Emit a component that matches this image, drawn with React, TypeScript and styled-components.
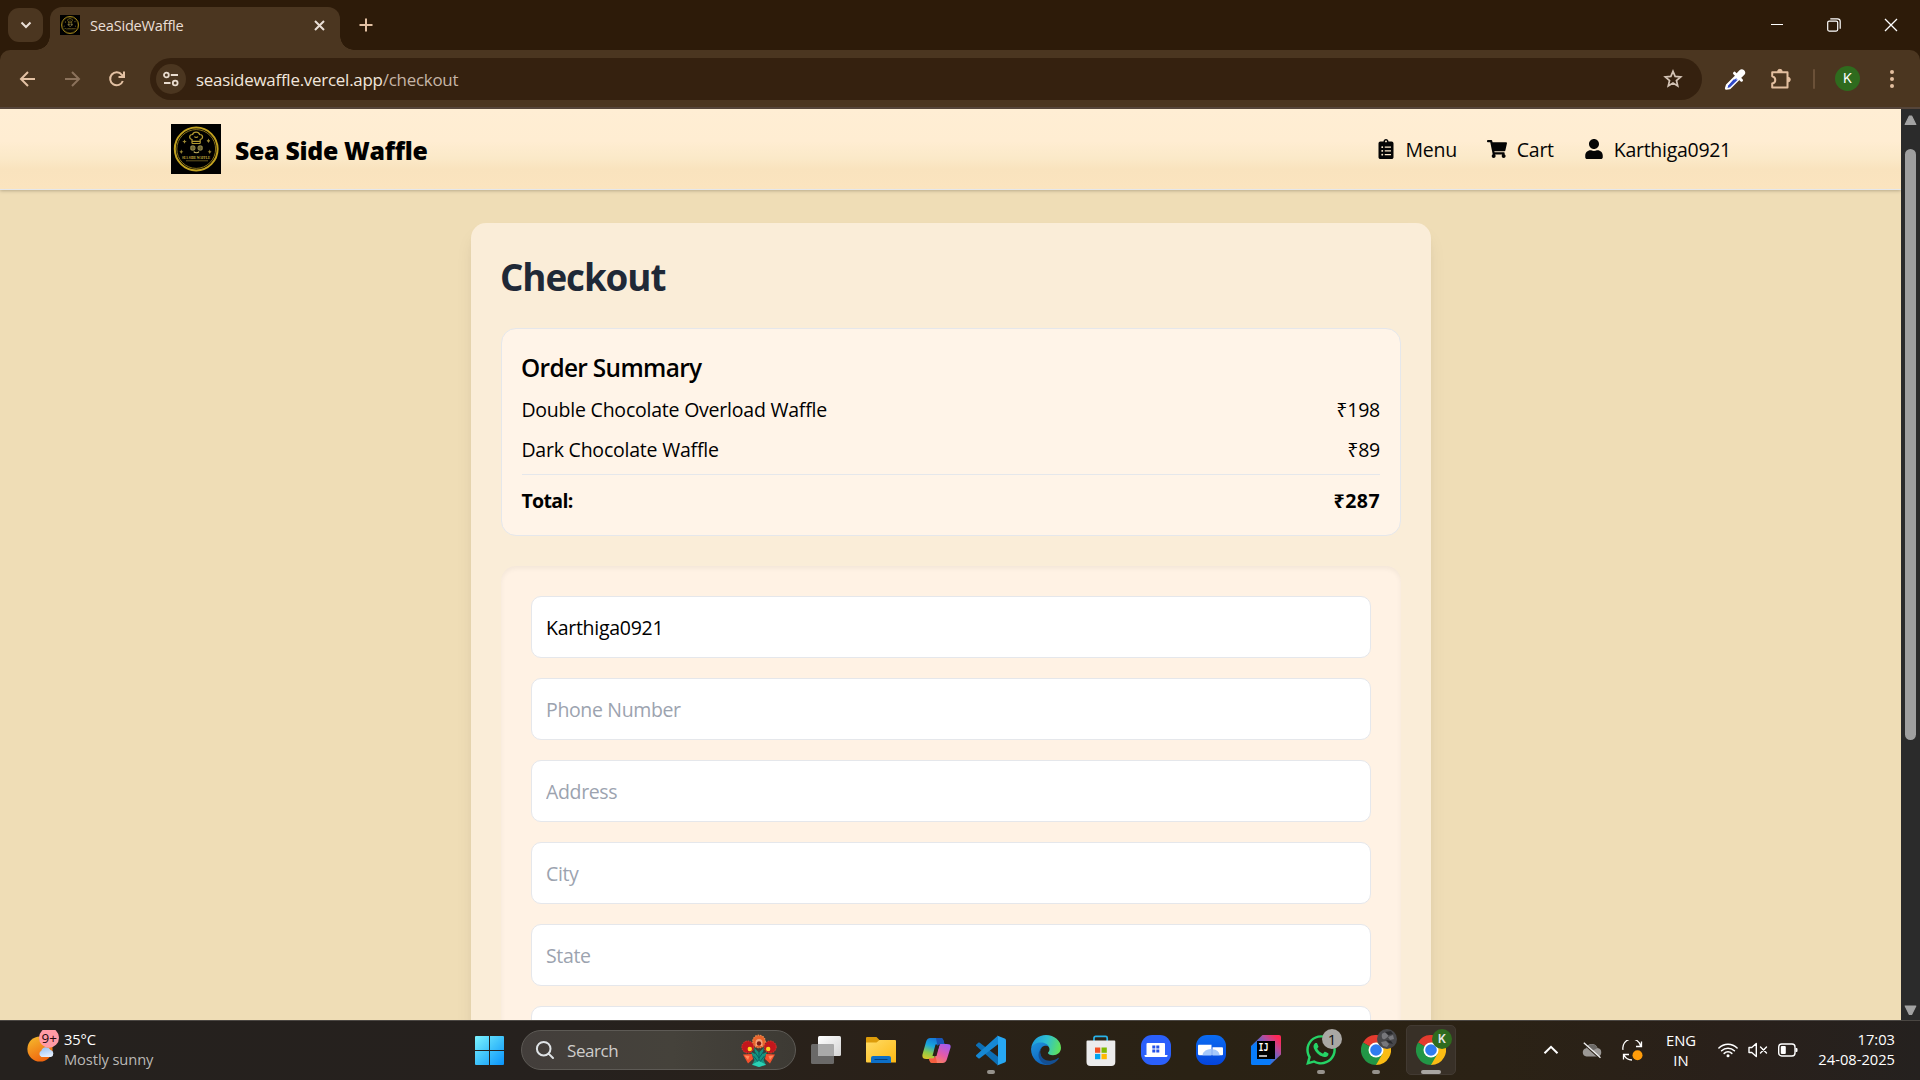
import React from "react";
import styled, { createGlobalStyle, css } from "styled-components";
import { FaClipboardList, FaShoppingCart, FaUser, FaWhatsapp } from "react-icons/fa";

const GlobalStyle = createGlobalStyle`
  *, *::before, *::after { box-sizing: border-box; }
  html, body { margin: 0; padding: 0; overflow: hidden; background: #2d1b09; }
  body { font-family: "Segoe UI", "Open Sans", "Noto Sans", sans-serif; }
  svg { display: block; flex: none; }
`;

const Screen = styled.div`
  display: flex;
  flex-direction: column;
  width: 1920px;
  height: 1080px;
  overflow: hidden;
`;

/* ---------- browser chrome ---------- */

const TabStrip = styled.div`
  display: flex;
  height: 50px;
  padding: 7px 0 0 8px;
  background: #2d1b09;
`;

const TabSearch = styled.button`
  display: flex;
  align-items: center;
  justify-content: center;
  width: 35px;
  height: 34px;
  margin: 1px 7px 0 0;
  padding: 0;
  border: 0;
  border-radius: 11px;
  background: #4b3620;
`;

const Tab = styled.div`
  position: relative;
  display: flex;
  align-items: center;
  width: 290px;
  height: 43px;
  padding: 0 14px 7px 10px;
  border-radius: 12px 12px 0 0;
  background: #4b3620;

  &::before,
  &::after {
    content: "";
    position: absolute;
    bottom: 0;
    width: 14px;
    height: 14px;
  }
  &::before {
    left: -14px;
    background: radial-gradient(circle at 0 0, transparent 13.5px, #4b3620 14px);
  }
  &::after {
    right: -14px;
    background: radial-gradient(circle at 100% 0, transparent 13.5px, #4b3620 14px);
  }
`;

const TabTitle = styled.span`
  flex: 1;
  margin-left: 10px;
  font-size: 14.6px;
  letter-spacing: -0.22px;
  line-height: 20px;
  color: #eadfd6;
`;

const NewTab = styled.div`
  display: flex;
  align-items: center;
  height: 36px;
  margin-left: 19px;
`;

const WindowControls = styled.div`
  display: flex;
  align-items: center;
  height: 35px;
  margin-left: auto;
  padding-right: 22px;
  gap: 43px;
`;

const ToolbarBack = styled.div`
  background: #2d1b09;
`;

const Toolbar = styled.div`
  display: flex;
  align-items: center;
  height: 59px;
  padding: 0 24px 0 17px;
  border-bottom: 2px solid #55453a;
  border-radius: 10px 10px 0 0;
  background: #4b3620;
`;

const NavButtons = styled.div`
  display: flex;
  gap: 25px;
  width: 133px;
`;

const Omnibox = styled.div`
  display: flex;
  align-items: center;
  width: 1552px;
  height: 42px;
  margin-top: 1px;
  padding: 0 19px 0 6px;
  border-radius: 21px;
  background: #35210f;
`;

const SiteInfo = styled.span`
  display: flex;
  align-items: center;
  justify-content: center;
  width: 30px;
  height: 30px;
  border-radius: 50%;
  background: #4b3620;
`;

const Url = styled.span`
  flex: 1;
  margin-left: 10px;
  padding-top: 1px;
  font-size: 16.9px;
  letter-spacing: -0.23px;
  line-height: 24px;
  color: #f1e6dc;
`;

const UrlPath = styled.span`
  color: #c6b5a6;
`;

const Extensions = styled.div`
  display: flex;
  align-items: center;
  flex: 1;
  margin-left: 22px;
`;

const ExtensionDivider = styled.span`
  width: 2px;
  height: 20px;
  margin: 0 20px 0 21px;
  border-radius: 1px;
  background: #6b5138;
`;

const Avatar = styled.span`
  display: flex;
  align-items: center;
  justify-content: center;
  width: 25px;
  height: 25px;
  border-radius: 50%;
  background: #2f6b1e;
  color: #fff;
  font: 13.5px/25px Inter, sans-serif;
`;

const MenuDots = styled.span`
  display: flex;
  flex-direction: column;
  gap: 3px;
  margin-left: auto;
  padding-right: 2px;

  i {
    width: 4px;
    height: 4px;
    border-radius: 50%;
    background: #e3bf9f;
  }
`;

/* ---------- page ---------- */

const Viewport = styled.div`
  display: flex;
  height: 911px;
  overflow: hidden;
`;

const Page = styled.div`
  display: flex;
  flex-direction: column;
  width: 1901px;
  height: 911px;
  overflow: hidden;
  background: #efddb6;
`;

const SiteHeader = styled.header`
  display: flex;
  flex: none;
  align-items: center;
  justify-content: space-between;
  height: 81px;
  padding: 0 170px 0 171px;
  border-bottom: 1px solid #e5e7eb;
  background: linear-gradient(180deg, #ffeed4 0%, #ffedd2 40%, #fbe9c8 62%, #f9e3be 75%, #fbe4bf 100%);
  box-shadow: 0 1px 4px rgba(0, 0, 0, 0.16), 0 1px 2px rgba(0, 0, 0, 0.08);
`;

const Brand = styled.div`
  display: flex;
  align-items: center;
  gap: 14px;
`;

const BrandName = styled.span`
  padding-top: 1px;
  font-size: 24.8px;
  font-weight: 800;
  letter-spacing: -0.28px;
  line-height: 32px;
  color: #000;
`;

const SiteNav = styled.nav`
  display: flex;
  gap: 30px;
`;

const NavLink = styled.a`
  display: flex;
  align-items: center;
  gap: 10px;
  font-size: 19.5px;
  letter-spacing: -0.28px;
  line-height: 30px;
  color: #050505;

  span {
    padding-top: 2px;
  }

  svg {
    width: 20px;
    height: 20px;
  }
`;

const CheckoutCard = styled.main`
  flex: none;
  width: 960px;
  height: 1000px;
  margin: 33px 0 0 471px;
  padding: 30px;
  border-radius: 15px;
  background: #faedd8;
  box-shadow: 0 12px 19px -4px rgba(0, 0, 0, 0.1), 0 5px 8px -5px rgba(0, 0, 0, 0.1);
`;

const PageTitle = styled.h1`
  margin: 0 0 30px -1px;
  height: 45px;
  font-size: 36.8px;
  font-weight: 700;
  letter-spacing: -1.1px;
  line-height: 48px;
  color: #1f2937;
`;

const Summary = styled.section`
  height: 208px;
  padding: 20px;
  border: 1px solid #e5e7eb;
  border-radius: 15px;
  background: #fff4e8;
  color: #000;
`;

const SummaryTitle = styled.h2`
  height: 35px;
  margin: 0 0 10px -1px;
  font-size: 24.4px;
  font-weight: 600;
  letter-spacing: -0.66px;
  line-height: 37px;
`;

const Line = styled.div<{ $total?: boolean }>`
  display: flex;
  justify-content: space-between;
  height: 30px;
  margin-bottom: 10px;
  font-size: 19.5px;
  letter-spacing: -0.22px;
  line-height: 32px;

  span:first-child {
    margin-left: -0.6px;
  }

  ${(p) =>
    p.$total &&
    css`
      height: 41px;
      margin: 0;
      padding-top: 10px;
      border-top: 1px solid #e5e7eb;
      font-weight: 700;
      letter-spacing: -0.65px;

      span:last-child {
        letter-spacing: 0.45px;
      }
    `}
`;

const Form = styled.form`
  display: flex;
  flex-direction: column;
  gap: 20px;
  height: 700px;
  margin-top: 30px;
  padding: 30px;
  border-radius: 15px;
  background: #fff2e4;
  box-shadow: inset 0 2.5px 5px rgba(0, 0, 0, 0.05);
`;

const Field = styled.input`
  width: 840px;
  height: 62px;
  padding: 1px 14px 0;
  border: 1px solid #e5e7eb;
  border-radius: 10px;
  background: #fff;
  font-family: inherit;
  font-size: 19.5px;
  letter-spacing: -0.27px;
  line-height: 30px;
  color: #000;
  outline: 0;

  &::placeholder {
    color: #9ca3af;
    opacity: 1;
    letter-spacing: -0.35px;
  }
`;

const Scrollbar = styled.div`
  display: flex;
  flex-direction: column;
  align-items: center;
  width: 19px;
  padding: 6px 0 4px;
  background: #2b2b2b;
`;

const Thumb = styled.div`
  width: 11px;
  height: 591px;
  margin: 23px 0 auto;
  border-radius: 6px;
  background: #9f9f9f;
`;

/* ---------- taskbar ---------- */

const Taskbar = styled.footer`
  display: flex;
  height: 60px;
  border-top: 1px solid #4b4743;
  background: linear-gradient(90deg, #25211e 0%, #26211e 30%, #2a2118 48%, #2a2214 62%, #2b2215 78%, #29201a 90%, #25211f 100%);
  color: #fff;
`;

const Weather = styled.div`
  display: flex;
  width: 460px;
  padding: 9px 0 0 26px;
`;

const WeatherText = styled.div`
  margin: -1px 0 0 5px;
  font-size: 14.7px;
  letter-spacing: -0.1px;
  line-height: 20px;
  color: #fff;
`;

const Muted = styled.div`
  color: #bab8b6;
`;

const Slot = styled.div<{ $active?: boolean }>`
  position: relative;
  display: flex;
  align-items: center;
  justify-content: center;
  width: 50px;
  height: 50px;
  margin: 4px 2.5px 0;
  border: 1px solid ${(p) => (p.$active ? "#423a32" : "transparent")};
  border-radius: 5px;
  background: ${(p) => (p.$active ? "#383027" : "transparent")};
`;

const StartSlot = styled(Slot)`
  width: 59px;
  margin: 4px 2px 0 0;
`;

const SearchBox = styled.div`
  display: flex;
  align-items: center;
  width: 275px;
  height: 40px;
  margin: 9px 2.5px 0 0;
  padding: 0 18px 0 13px;
  border: 1px solid #5d5a55;
  border-radius: 20px;
  background: linear-gradient(90deg, #433e3b, #45423b 55%, #3d3a34);
`;

const SearchLabel = styled.span`
  flex: 1;
  margin-left: 12px;
  padding-top: 1px;
  font-size: 17px;
  letter-spacing: -0.42px;
  color: #cfcdcb;
`;

const Running = styled.span<{ $wide?: boolean }>`
  position: absolute;
  left: 50%;
  bottom: 0;
  width: ${(p) => (p.$wide ? 20 : 8)}px;
  height: 4px;
  border-radius: 2px;
  background: ${(p) => (p.$wide ? "#a9a6a2" : "#96928c")};
  transform: translateX(-50%);
`;

const IconBadge = styled.span<{ $bg: string; $color?: string }>`
  position: absolute;
  top: 3px;
  right: 3px;
  width: 20px;
  height: 20px;
  border-radius: 50%;
  background: ${(p) => p.$bg};
  color: ${(p) => p.$color ?? "#111"};
  font: 15px/20px "Open Sans", sans-serif;
  text-align: center;
`;

const AvatarBadge = styled(IconBadge)`
  font: 600 11.5px/20px Inter, sans-serif;
`;

const PhotoBadge = styled.svg`
  position: absolute;
  top: 3px;
  right: 3px;
`;

const Tray = styled.div`
  display: flex;
  align-items: center;
  margin-left: auto;
  padding: 0 25px 1px 0;
`;

const Language = styled.div`
  width: 34px;
  margin: 0 20px 0 21px;
  font-size: 14.8px;
  line-height: 20px;
  text-align: center;
`;

const Clock = styled.div`
  width: 97px;
  padding-bottom: 2px;
  font-size: 14.7px;
  line-height: 20px;
  text-align: right;
`;

const TraySpacer = styled.span<{ $w: number }>`
  width: ${(p) => p.$w}px;
`;

/* ---------- drawings ---------- */

const Logo = ({ size }: { size: number }) => (
  <svg width={size} height={size} viewBox="0 0 50 50" fill="none">
    <rect width="50" height="50" fill="#000" />
    <circle cx="25.2" cy="25" r="21.4" stroke="#c0a01f" strokeWidth="2" />
    <circle cx="25.2" cy="25" r="19.4" stroke="#86701a" strokeWidth="1" />
    <path
      d="M21 19.500v-4c-3.400-.8-3-5.200.6-5 .8-3.200 6.200-3.200 7 0 3.600-.2 4 4.200.6 5v4M21 17.300h8.200M21 19.500h8.200M23.500 12.500c.6 1.200 2.800 1.200 3.400 0"
      stroke="#b39a30"
      strokeWidth="1.2"
    />
    <circle cx="21.8" cy="24" r="2.7" fill="#8f8446" />
    <circle cx="29.2" cy="24" r="2.7" fill="#8f8446" />
    <path d="M21.800 21.500v5M19.300 24h5M29.200 21.500v5M26.700 24h5" stroke="#514a26" strokeWidth="0.6" />
    <path d="M22.800 27.600c1 1.500 4.200 1.500 5.200 0" stroke="#c4b160" strokeWidth="1.200" />
    <path
      d="m13.500 15.500.7 1.500 1.500.5-1.500.7-.7 1.500-.7-1.500-1.500-.7 1.500-.5zM10.300 25.500l.6 1.700 1.500.5-1.500.7-.6 1.500-.7-1.500-1.200-.7 1.200-.5zM38.800 25.500l.6 1.700 1.200.5-1.200.7-.6 1.500-.7-1.500-1.500-.7 1.500-.5zM37.500 14.500l.7 1.500 1 .8-1 .9-.7 1.300-.7-1.300-1.200-.9 1.200-.8z"
      fill="#a08c35"
    />
    <text x="25" y="34.600" fill="#d0b640" fontSize="4.200" fontWeight="700" textAnchor="middle" textLength="28" lengthAdjust="spacingAndGlyphs" fontFamily="Liberation Serif, serif">
      SEA SIDE WAFFLE
    </text>
    <path d="M15 36.800h22" stroke="#7d6c26" strokeWidth="0.8" />
  </svg>
);

const Stroke = ({ w, h = w, vb, d, color = "#e3c1a3", sw = 2, cap = "butt" }: { w: number; h?: number; vb?: string; d: string; color?: string; sw?: number; cap?: "butt" | "round" }) => (
  <svg width={w} height={h} viewBox={vb ?? `0 0 ${w} ${h}`} fill="none" stroke={color} strokeWidth={sw} strokeLinecap={cap} strokeLinejoin={cap === "round" ? "round" : "miter"}>
    <path d={d} />
  </svg>
);

const TuneIcon = () => (
  <svg width="16" height="16" viewBox="0 0 16 16" fill="none" stroke="#e9dccf" strokeWidth="1.8">
    <circle cx="3.400" cy="4" r="2.400" />
    <path d="M7.800 4H15M1 12h6.500" />
    <circle cx="12.200" cy="12" r="2.400" />
  </svg>
);

const StarIcon = () => (
  <svg width="20" height="20" viewBox="0 0 20 20" fill="none" stroke="#d3c3b5" strokeWidth="1.700">
    <path d="m10 2.300 2.150 5.150 5.550.45-4.250 3.650 1.300 5.450L10 14.100 5.250 17l1.300-5.450L2.300 7.900l5.550-.45z" />
  </svg>
);

const DropperIcon = () => (
  <svg width="22" height="24" viewBox="0 0 22 24" fill="none">
    <path d="M13 8.500 3.200 18.200 2.200 21.500 5.500 21 15.500 11" stroke="#fff" strokeWidth="2.600" fill="#3950c8" strokeLinejoin="round" />
    <path d="M9.500 12.500h4.500L6 20.300l-2.500.6.800-2.500z" fill="#2f49c9" />
    <path d="m10.500 6.200 7 7" stroke="#fff" strokeWidth="3" strokeLinecap="round" />
    <path d="m14.500 9 3.300-3.300" stroke="#fff" strokeWidth="6.600" strokeLinecap="round" />
  </svg>
);

const PuzzleIcon = () => (
  <svg width="22" height="22" viewBox="0 0 22 22" fill="none" stroke="#e3bf9f" strokeWidth="2" strokeLinejoin="round">
    <path d="M2.200 4.200H17.500V19.500H2.200V15.500C6.300 14.500 6.300 9.300 2.200 8.200Z" />
    <path d="M7.600 3.600a2.300 2.300 0 0 1 4.600 0ZM18 9.300a2.300 2.300 0 0 1 0 4.600Z" fill="#e3bf9f" strokeWidth="1" />
  </svg>
);

const RestoreIcon = () => (
  <svg width="14" height="14" viewBox="0 0 14 14" fill="none" stroke="#fff" strokeWidth="1.200">
    <rect x="0.700" y="3.100" width="10" height="10" rx="1.500" />
    <path d="M3.300.8h7.200a2.700 2.700 0 0 1 2.700 2.700v7.200" />
  </svg>
);

const Triangle = ({ down }: { down?: boolean }) => (
  <svg width="13" height="11" viewBox="0 0 13 11">
    <path d={down ? "M1.200 1h10.600l-4.200 8.500h-2.200z" : "M1.200 9.500h10.600L7.600 1H5.400z"} fill="#a3a3a3" stroke="#a3a3a3" strokeWidth="1.200" strokeLinejoin="round" />
  </svg>
);

const WeatherIcon = () => (
  <svg width="33" height="36" viewBox="0 0 33 36">
    <defs>
      <linearGradient id="sun" x1="0.200" y1="0" x2="0.700" y2="1">
        <stop offset="0" stopColor="#f5b72c" />
        <stop offset="1" stopColor="#ef5f0c" />
      </linearGradient>
      <linearGradient id="cloud" x1="0" y1="0" x2="0.400" y2="1">
        <stop offset="0" stopColor="#8fbdf2" />
        <stop offset="1" stopColor="#e3edfd" />
      </linearGradient>
    </defs>
    <circle cx="14" cy="19" r="12.600" fill="url(#sun)" />
    <path d="M15.500 27a3.500 3.500 0 0 1-.2-6.300 5 5 0 0 1 9.200-.6 3.600 3.600 0 0 1 .5 6.900z" fill="url(#cloud)" />
    <circle cx="23" cy="7.800" r="10" fill="#ff9ba5" />
    <text x="23.200" y="13" textAnchor="middle" fontSize="13.500" fontFamily="Open Sans, sans-serif" fill="#24090d">
      9+
    </text>
  </svg>
);

const WindowsIcon = () => (
  <svg width="29" height="29" viewBox="0 0 29 29">
    <defs>
      <linearGradient id="win" x1="0" y1="0" x2="1" y2="1">
        <stop offset="0" stopColor="#7cf3ff" />
        <stop offset="0.500" stopColor="#3fc3fb" />
        <stop offset="1" stopColor="#0a93fb" />
      </linearGradient>
    </defs>
    <path d="M1 0h13v14H0V1a1 1 0 0 1 1-1ZM15 0h13a1 1 0 0 1 1 1v13H15ZM0 15h14v14H1a1 1 0 0 1-1-1ZM15 15h14v13a1 1 0 0 1-1 1H15Z" fill="url(#win)" />
  </svg>
);

const PeacockIcon = () => (
  <svg width="36" height="33" viewBox="0 0 36 33">
    <circle cx="18" cy="7.500" r="6.300" fill="#e8632c" stroke="#f08a4a" strokeWidth="1.200" strokeDasharray="1.500 1" />
    <path d="M14.500 12V8.500a3.500 3.500 0 0 1 7 0V12z" fill="#f7a27a" />
    <circle cx="18" cy="9.500" r="2.200" fill="#7d1a12" />
    <circle cx="6.800" cy="13" r="6" fill="#c3161c" stroke="#e23a2a" strokeWidth="1" strokeDasharray="1.500 1" />
    <circle cx="29.200" cy="13" r="6" fill="#c3161c" stroke="#e23a2a" strokeWidth="1" strokeDasharray="1.500 1" />
    <circle cx="8.800" cy="15" r="2.200" fill="#ffd21f" />
    <circle cx="27.200" cy="15" r="2.200" fill="#ffd21f" />
    <path d="M2 20.500 11 20l1 5-5 4.500zM34 20.500 25 20l-1 5 5 4.500z" fill="#f4502c" />
    <path d="m3.500 21.500 5 .5-1.500 4zM32.500 21.500l-5 .5 1.500 4z" fill="#ff8a5c" />
    <path d="m11 31 2.500-5-3.500-8 4.500 2-1.500-6.500 5 5 5-5-1.500 6.500 4.500-2-3.500 8 2.500 5-7 2z" fill="#159480" />
    <path d="M18 16v15M13 17l5 7 5-7M12.500 22l5.500 7 5.500-7" stroke="#0b5e63" strokeWidth="1" fill="none" />
    <path d="m11 30.500 7-3.500 7 3.500-7 2.500z" fill="#2bd0b4" />
  </svg>
);

const TaskViewIcon = () => (
  <svg width="30" height="28" viewBox="0 0 30 28">
    <defs>
      <linearGradient id="tv" x1="0" y1="0" x2="1" y2="1">
        <stop offset="0" stopColor="#fff" />
        <stop offset="1" stopColor="#d4d4d4" />
      </linearGradient>
    </defs>
    <rect x="0" y="8" width="23" height="20" rx="1.500" fill="#6a6968" />
    <rect x="7" y="0" width="23" height="20" rx="1.500" fill="url(#tv)" />
    <path d="M7 8h15a1 1 0 0 1 1 1v11H8.500A1.500 1.500 0 0 1 7 18.500z" fill="#a9a9a9" />
  </svg>
);

const FolderIcon = () => (
  <svg width="30" height="26" viewBox="0 0 30 26">
    <defs>
      <linearGradient id="fold" x1="0" y1="0" x2="1" y2="1">
        <stop offset="0" stopColor="#ffdc66" />
        <stop offset="1" stopColor="#fdb813" />
      </linearGradient>
    </defs>
    <path d="M0 1a1 1 0 0 1 1-1h9.500l3 3H29v5H0z" fill="#dd9c0a" />
    <path d="M0 5.500h10.500l3-2.500H29a1 1 0 0 1 1 1v21.500H1a1 1 0 0 1-1-1z" fill="url(#fold)" />
    <path d="M5 26v-5a2 2 0 0 1 2-2h16a2 2 0 0 1 2 2v5z" fill="#0d6fc8" />
    <path d="M8.500 22.500h13" stroke="#053f7c" strokeWidth="1" />
  </svg>
);

const CopilotIcon = () => (
  <svg width="29" height="27" viewBox="0 0 29 27">
    <defs>
      <linearGradient id="cpa" x1="0.600" y1="0" x2="0.300" y2="1">
        <stop offset="0" stopColor="#1475d8" />
        <stop offset="0.350" stopColor="#19a5dd" />
        <stop offset="0.650" stopColor="#8ccb4c" />
        <stop offset="1" stopColor="#f2c51c" />
      </linearGradient>
      <linearGradient id="cpb" x1="0.800" y1="0" x2="0.200" y2="1">
        <stop offset="0" stopColor="#a45cf0" />
        <stop offset="0.500" stopColor="#e45aa9" />
        <stop offset="1" stopColor="#ff8a4d" />
      </linearGradient>
    </defs>
    <path d="M14 1h4.500c2 0 2.600 1.300 3.100 3l.8 3H19c-2.200 0-3.200 1.200-3.800 3.200L11 25c.5-2-.5-3-2.500-3H4.300C1 22-.2 20 .6 17L4 5c.8-2.800 2-4 4.500-4z" fill="url(#cpa)" />
    <path d="M15 26h-4.500c-2 0-2.600-1.300-3.100-3l-.4-1.500h3c2.200 0 3.200-1.200 3.800-3.200L18 7h6.700C28 7 29.200 8 28.400 11L25 22c-.8 2.800-2 4-4.500 4z" fill="url(#cpb)" />
    <path d="M13.500 7.500h4l-3 11.500h-4z" fill="#2a2118" />
    <path d="M14 1h4.500c2 0 2.600 1.300 3.100 3l.8 3H19c-1.800 0-2.800.8-3.500 2.300z" fill="#1a55b8" />
    <path d="M15 26h-4.500c-2 0-2.600-1.300-3.100-3l-.4-1.500h3c1.800 0 2.900-.8 3.600-2.300z" fill="#f2553a" opacity="0.800" />
  </svg>
);

const VsCodeIcon = () => (
  <svg width="30" height="31" viewBox="0 0 30 31">
    <path d="M0 9.700 2.300 7.800c.5-.4 1-.3 1.500 0L22 21.700v8.800L.3 11.100C-.1 10.700-.2 10.100 0 9.700Z" fill="#0d6fb5" />
    <path d="M0 21.200 2.300 23.200c.5.400 1 .3 1.500 0L22 9.300V.5L.3 19.900c-.4.400-.5.900-.3 1.300Z" fill="#1688d4" />
    <path d="M21 .5 28.700 3.500c.8.400 1.300 1 1.300 2v20c0 1-.5 1.600-1.300 2L21 30.500c.7-.2 1-.6 1-1.500V2c0-.9-.3-1.300-1-1.500Z" fill="#27a7f3" />
  </svg>
);

const EdgeIcon = () => (
  <svg width="30" height="30" viewBox="0 0 30 30">
    <defs>
      <linearGradient id="e1" x1="0" y1="0.300" x2="1" y2="0.500">
        <stop offset="0" stopColor="#1c9be0" />
        <stop offset="0.500" stopColor="#2fc0d0" />
        <stop offset="1" stopColor="#5fe25a" />
      </linearGradient>
      <linearGradient id="e2" x1="0" y1="0" x2="0.500" y2="1">
        <stop offset="0" stopColor="#1f93dd" />
        <stop offset="1" stopColor="#0e63bb" />
      </linearGradient>
    </defs>
    <path d="M.2 13C1.200 5.300 7.400 0 15 0c8.300 0 15 5.800 15 12.800 0 4.600-3.700 7.500-8 7.500-3.200 0-5-1-5-2.200 0-1 1.500-1.400 1.500-3.800 0-3-3-5.300-7-5.300C6 9 1.500 11 .2 13Z" fill="url(#e1)" />
    <path d="M.1 13.500C1.500 9.600 5.500 7.600 10 7.600c3.500 0 7 1.600 8.200 4.700-1.300-1.300-2.700-1.700-4.200-1.500-3.500.5-5.500 4-4.800 8 .8 5.200 5.300 9 10.300 10.400C17.800 29.800 16.500 30 15 30 6.500 30-.5 22.500.1 13.500Z" fill="url(#e2)" />
    <path d="M9.200 17c.2 6 5.300 9.200 10.300 8.700 3.300-.3 5.800-1.500 7.300-2.700.7-.5 1.300.1.900.8-2 3-5 5.200-8.700 5.900-6 .5-11.500-4-11.500-9.800 0-3.600 2-6.500 4.500-8-1.700 1.400-2.900 3-2.800 5.100Z" fill="#144f92" />
  </svg>
);

const StoreIcon = () => (
  <svg width="30" height="31" viewBox="0 0 30 31">
    <path d="M8 6V3a1.600 1.600 0 0 1 1.600-1.600h10A1.600 1.600 0 0 1 21.200 3v3" fill="none" stroke="#29b3ea" strokeWidth="1.700" />
    <path d="M.5 6.500a1 1 0 0 1 1-1h26.800a1 1 0 0 1 1 1V27a4 4 0 0 1-4 4H4.500a4 4 0 0 1-4-4z" fill="#ececec" />
    <path d="M9 12.500h5.300v5.300H9z" fill="#f25022" />
    <path d="M15.500 12.500h5.300v5.300h-5.300z" fill="#7fba00" />
    <path d="M9 18.900h5.300v5.300H9z" fill="#00a4ef" />
    <path d="M15.500 18.900h5.300v5.300h-5.300z" fill="#ffb900" />
  </svg>
);

const LaptopIcon = () => (
  <svg width="30" height="30" viewBox="0 0 30 30">
    <rect width="30" height="30" rx="11" fill="#2b60fb" />
    <rect x="5.500" y="8" width="18.500" height="12.500" rx="1" fill="#fff" />
    <path d="M3.500 20h23v.5a1.500 1.500 0 0 1-1.500 1.500H5A1.500 1.500 0 0 1 3.500 20.500z" fill="#fff" />
    <path d="M11.300 10.500h3v3h-3zM15.300 10.500h3v3h-3zM11.300 14.500h3v3h-3zM15.300 14.500h3v3h-3z" fill="#2552e8" />
  </svg>
);

const ZoomIcon = () => (
  <svg width="30" height="30" viewBox="0 0 30 30">
    <defs>
      <linearGradient id="zm" x1="0" y1="0" x2="0" y2="1">
        <stop offset="0" stopColor="#0a6cf2" />
        <stop offset="1" stopColor="#0544dc" />
      </linearGradient>
    </defs>
    <rect width="30" height="30" rx="11" fill="url(#zm)" />
    <path d="M2.500 9.700h13v10.500h-12a1.500 1.500 0 0 1-1.500-1.500v-8.500z" fill="#fff" />
    <path d="M16.500 12.300h9.500a1 1 0 0 1 1 1v6a1 1 0 0 1-1 1h-9.500z" fill="#fff" />
    <path d="M6.500 20.200a8.500 7 0 0 1 9-6.200v6.200zM16.500 14.200a8 7 0 0 1 7.300 6h-7.300z" fill="#a5c8fb" />
  </svg>
);

const IntelliJIcon = () => (
  <svg width="30" height="30" viewBox="0 0 30 30">
    <defs>
      <linearGradient id="ij" x1="0.100" y1="0.900" x2="0.900" y2="0.100">
        <stop offset="0" stopColor="#087cfa" />
        <stop offset="0.450" stopColor="#3f6fd8" />
        <stop offset="0.750" stopColor="#b84a9a" />
        <stop offset="1" stopColor="#fe2857" />
      </linearGradient>
    </defs>
    <path d="M11.500 0H28a2 2 0 0 1 2 2v17.500L19 30H2a2 2 0 0 1-2-2V11z" fill="url(#ij)" />
    <path d="M0 12 6 7v17h14l-1 6H2a2 2 0 0 1-2-2z" fill="#087cfa" />
    <rect x="6" y="6" width="18" height="18" fill="#000" />
    <text x="7.500" y="15.500" fill="#fff" fontSize="10.500" fontWeight="700" fontFamily="DejaVu Sans Mono, monospace" textLength="10" lengthAdjust="spacingAndGlyphs">
      IJ
    </text>
    <path d="M8 21h8" stroke="#fff" strokeWidth="1.400" />
  </svg>
);

const ChromeIcon = () => (
  <svg width="30" height="30" viewBox="0 0 30 30">
    <path d="M15 15 2 7.500A15 15 0 0 1 28 7.500H15z" fill="#e33b2e" />
    <path d="M15 15 15 7.500H28A15 15 0 0 1 15 30z" fill="#fbbc14" />
    <path d="M15 15 21.500 18.700 15 30A15 15 0 0 1 2 7.500z" fill="#229646" />
    <circle cx="15" cy="15" r="7.500" fill="#fff" />
    <circle cx="15" cy="15" r="5.800" fill="#2f7cf0" />
  </svg>
);

const ProfilePhoto = () => (
  <PhotoBadge width="20" height="20" viewBox="0 0 20 20">
    <circle cx="10" cy="10" r="10" fill="#48484b" />
    <path d="M5 5c2-2 5-2 6 0s-1 4-3 5-4-1-3-5ZM11 8l5-2 1 4-4 1zM4 13l5-1 3 3-2 3-4-1z" fill="#77777b" />
    <path d="M8 3l6-1 2 3-5 1zM9 11l5 1 2 3-4-1z" fill="#29292b" />
  </PhotoBadge>
);

const CloudOffIcon = () => (
  <svg width="20" height="17" viewBox="0 0 20 17">
    <path d="M4.500 14.500a4.200 4.200 0 0 1-.3-8.300A6 6 0 0 1 15.500 6a4.300 4.300 0 0 1 .2 8.500z" fill="#9b9895" />
    <path d="M5 5a6 6 0 0 1 10.500 1L10 9z" fill="#6d6a67" />
    <path d="M1.200 1.400 17.900 16.400" stroke="#2a2117" strokeWidth="1.600" />
    <path d="M1.800.8 18.500 15.800" stroke="#f2f2f2" strokeWidth="1.300" />
  </svg>
);

const SyncIcon = () => (
  <svg width="21" height="21" viewBox="0 0 21 21" fill="none" stroke="#fff" strokeWidth="1.300">
    <path d="M1 9.800A9 9 0 0 1 18.800 6.300M19.500 1.500v5h-5.500M1.500 19.500v-5H7M2 15a9 9 0 0 0 8 5" />
    <circle cx="15.500" cy="15.300" r="5" fill="#ff9c0a" stroke="none" />
  </svg>
);

const WifiIcon = () => (
  <svg width="20" height="16" viewBox="0 0 20 16" fill="none" stroke="#fff" strokeWidth="1.500" strokeLinecap="round">
    <path d="M.9 6a12.800 12.800 0 0 1 18.200 0M3.600 8.800a9 9 0 0 1 12.800 0M6.200 11.400a5.400 5.400 0 0 1 7.600 0" />
    <circle cx="10" cy="13.700" r="1.500" fill="#fff" stroke="none" />
  </svg>
);

const MuteIcon = () => (
  <svg width="20" height="16" viewBox="0 0 20 16" fill="none" stroke="#fff" strokeWidth="1.400" strokeLinejoin="round" strokeLinecap="round">
    <path d="M1 5.500v5h2.800L8.300 14.500v-13L3.800 5.500zM12.500 5l6 6M18.500 5l-6 6" />
  </svg>
);

const BatteryIcon = () => (
  <svg width="20" height="14" viewBox="0 0 20 14" fill="none">
    <rect x="0.700" y="1" width="16.300" height="12" rx="3" stroke="#fff" strokeWidth="1.400" />
    <rect x="2.800" y="3" width="5" height="8" rx="1" fill="#fff" />
    <path d="M17.500 5h1a1 1 0 0 1 1 1v2a1 1 0 0 1-1 1h-1z" fill="#fff" />
  </svg>
);

/* ---------- data ---------- */

const items = [
  { name: "Double Chocolate Overload Waffle", price: "₹198" },
  { name: "Dark Chocolate Waffle", price: "₹89" },
];

const fields = ["Phone Number", "Address", "City", "State", "Pincode"];

export default function App() {
  return (
    <Screen>
      <GlobalStyle />
      <TabStrip>
        <TabSearch>
          <Stroke w={12} h={8} d="M1.500 1.500 6 6 10.500 1.500" color="#eadfd6" />
        </TabSearch>
        <Tab>
          <Logo size={20} />
          <TabTitle>SeaSideWaffle</TabTitle>
          <Stroke w={13} d="M2 2 11 11M11 2 2 11" color="#eadfd6" />
        </Tab>
        <NewTab>
          <Stroke w={14} d="M7 .5v13M.5 7h13" />
        </NewTab>
        <WindowControls>
          <Stroke w={14} d="M1 6.500h12" color="#fff" sw={1} />
          <RestoreIcon />
          <Stroke w={14} d="M1 1 13 13M13 1 1 13" color="#fff" sw={1.3} />
        </WindowControls>
      </TabStrip>

      <ToolbarBack>
        <Toolbar>
          <NavButtons>
            <Stroke w={20} d="M18 10H4.500M11 3 4 10 11 17" />
            <Stroke w={20} d="M3 10H16.500M10 3 17 10 10 17" color="#8b725b" />
            <Stroke w={20} d="M15.800 12A6.500 6.500 0 1 1 14.800 5.800L17 8M17 2.500V8H11.500" />
          </NavButtons>
          <Omnibox>
            <SiteInfo>
              <TuneIcon />
            </SiteInfo>
            <Url>
              seasidewaffle.vercel.app<UrlPath>/checkout</UrlPath>
            </Url>
            <StarIcon />
          </Omnibox>
          <Extensions>
            <DropperIcon />
            <TraySpacer $w={24} />
            <PuzzleIcon />
            <ExtensionDivider />
            <Avatar>K</Avatar>
            <MenuDots>
              <i />
              <i />
              <i />
            </MenuDots>
          </Extensions>
        </Toolbar>
      </ToolbarBack>

      <Viewport>
        <Page>
          <SiteHeader>
            <Brand>
              <Logo size={50} />
              <BrandName>Sea Side Waffle</BrandName>
            </Brand>
            <SiteNav>
              <NavLink>
                <FaClipboardList />
                <span>Menu</span>
              </NavLink>
              <NavLink>
                <FaShoppingCart />
                <span>Cart</span>
              </NavLink>
              <NavLink>
                <FaUser />
                <span>Karthiga0921</span>
              </NavLink>
            </SiteNav>
          </SiteHeader>

          <CheckoutCard>
            <PageTitle>Checkout</PageTitle>
            <Summary>
              <SummaryTitle>Order Summary</SummaryTitle>
              {items.map((item) => (
                <Line key={item.name}>
                  <span>{item.name}</span>
                  <span>{item.price}</span>
                </Line>
              ))}
              <Line $total>
                <span>Total:</span>
                <span>₹287</span>
              </Line>
            </Summary>
            <Form>
              <Field defaultValue="Karthiga0921" />
              {fields.map((name) => (
                <Field key={name} placeholder={name} />
              ))}
            </Form>
          </CheckoutCard>
        </Page>
        <Scrollbar>
          <Triangle />
          <Thumb />
          <Triangle down />
        </Scrollbar>
      </Viewport>

      <Taskbar>
        <Weather>
          <WeatherIcon />
          <WeatherText>
            <div>35°C</div>
            <Muted>Mostly sunny</Muted>
          </WeatherText>
        </Weather>
        <StartSlot>
          <WindowsIcon />
        </StartSlot>
        <SearchBox>
          <Stroke w={20} d="M8.700 15.500a6.800 6.800 0 1 0 0-13.600 6.800 6.800 0 0 0 0 13.600ZM13.600 13.600 18 18" color="#dfe3e6" sw={2} cap="round" />
          <SearchLabel>Search</SearchLabel>
          <PeacockIcon />
        </SearchBox>
        <Slot><TaskViewIcon /></Slot>
        <Slot><FolderIcon /></Slot>
        <Slot><CopilotIcon /></Slot>
        <Slot><VsCodeIcon /><Running /></Slot>
        <Slot><EdgeIcon /></Slot>
        <Slot><StoreIcon /></Slot>
        <Slot><LaptopIcon /></Slot>
        <Slot><ZoomIcon /></Slot>
        <Slot><IntelliJIcon /></Slot>
        <Slot>
          <FaWhatsapp size={34} color="#25d366" />
          <IconBadge $bg="#a9a7a4">1</IconBadge>
          <Running />
        </Slot>
        <Slot>
          <ChromeIcon />
          <ProfilePhoto />
          <Running />
        </Slot>
        <Slot $active>
          <ChromeIcon />
          <AvatarBadge $bg="#2f6b1e" $color="#e8e8e8">K</AvatarBadge>
          <Running $wide />
        </Slot>
        <Tray>
          <Stroke w={16} h={10} d="M1.500 8.300 8 1.800 14.500 8.300" color="#fff" sw={2} />
          <TraySpacer $w={23} />
          <CloudOffIcon />
          <TraySpacer $w={20} />
          <SyncIcon />
          <Language>
            <div>ENG</div>
            <div>IN</div>
          </Language>
          <WifiIcon />
          <TraySpacer $w={10} />
          <MuteIcon />
          <TraySpacer $w={10} />
          <BatteryIcon />
          <Clock>
            <div>17:03</div>
            <div>24-08-2025</div>
          </Clock>
        </Tray>
      </Taskbar>
    </Screen>
  );
}
